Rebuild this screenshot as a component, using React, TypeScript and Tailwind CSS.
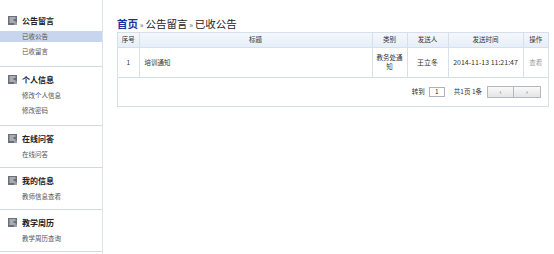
import React from 'react';

const menu = [
  { title: '公告留言', items: ['已收公告', '已收留言'], active: 0 },
  { title: '个人信息', items: ['修改个人信息', '修改密码'] },
  { title: '在线问答', items: ['在线问答'] },
  { title: '我的信息', items: ['教师信息查看'] },
  { title: '教学周历', items: ['教学周历查询'] },
];

const MenuIcon = () => (
  <svg width="9" height="9" viewBox="0 0 9 9" className="shrink-0">
    <rect x="0" y="0" width="9" height="9" fill="#6b7078" />
    <rect x="1.5" y="1.5" width="6" height="1" fill="#e8eaec" />
    <rect x="1.5" y="3.5" width="4" height="1" fill="#e8eaec" />
    <rect x="1.5" y="5.5" width="6" height="1" fill="#e8eaec" />
    <rect x="6" y="6.5" width="3" height="2.5" fill="#9aa0a8" />
  </svg>
);

const Sidebar = () => (
  <div className="w-[103px] shrink-0 border-r border-[#dde3ea] pt-[8px] h-[254px]">
    {menu.map((sec, i) => (
      <div key={i} className={`border-b border-[#d3d9e0] ${sec.items.length > 1 ? 'pb-[7px]' : 'pb-[5px]'}`}>
        <div className="flex items-center gap-[5px] pl-[8px] mt-[4px] h-[17px] text-[8px] font-bold text-[#222]">
          <MenuIcon />
          <span>{sec.title}</span>
        </div>
        {sec.items.map((it, j) => (
          <div key={j} className="h-[15px] flex items-center">
            <div
              className={`w-full pl-[22px] h-[11px] flex items-center text-[6.5px] text-[#555] ${
                sec.active === j ? 'bg-[#c8d5ef]' : ''
              }`}
            >
              {it}
            </div>
          </div>
        ))}
      </div>
    ))}
  </div>
);

const th = 'border border-[#d6e0eb] font-normal text-center text-[#333]';
const td = 'border border-[#d6e0eb] text-center text-[#333]';

export default function App() {
  return (
    <div className="flex w-[554px] h-[254px] bg-white overflow-hidden" style={{ fontFamily: '"Noto Sans CJK SC", "Noto Sans", sans-serif' }}>
      <Sidebar />
      <div className="pl-[14px] pr-[5px] pt-[16px] flex-1">
        <div className="text-[10.5px] leading-[15px] text-[#222]">
          <span className="text-[#1a2fa0] font-bold">首页</span>
          <span className="text-[#666] text-[8px]"> » </span>
          公告留言
          <span className="text-[#666] text-[8px]"> » </span>
          已收公告
        </div>
        <div className="border border-[#d6e0eb] w-[432px]">
          <table className="w-full border-collapse text-[6.5px] leading-[9px]">
            <thead>
              <tr className="h-[14px] bg-gradient-to-b from-[#f4f8fd] to-[#e6eef8]">
                <th className={`${th} w-[21px] border-t-0 border-l-0`}>序号</th>
                <th className={`${th} border-t-0`}>标题</th>
                <th className={`${th} w-[35px] border-t-0`}>类别</th>
                <th className={`${th} w-[41px] border-t-0`}>发送人</th>
                <th className={`${th} w-[75px] border-t-0`}>发送时间</th>
                <th className={`${th} w-[25px] border-t-0 border-r-0`}>操作</th>
              </tr>
            </thead>
            <tbody>
              <tr className="h-[30px]">
                <td className={`${td} border-l-0`}>1</td>
                <td className={`${td} text-left pl-[5px]`}>培训通知</td>
                <td className={`${td} px-[3px]`}>教务处通知</td>
                <td className={`${td} text-[7px]`}>王立冬</td>
                <td className={`${td} text-[7px]`}>2014-11-13 11:21:47</td>
                <td className={`${td} text-[#999] border-r-0`}>查看</td>
              </tr>
            </tbody>
          </table>
          <div className="h-[28px] flex items-center justify-end pr-[7px] text-[6.5px] text-[#333]">
            <span>转到</span>
            <div className="ml-[4px] w-[16px] h-[10px] border border-[#a9b4c0] flex items-center justify-center">1</div>
            <span className="ml-[9px]">共1页 1条</span>
            <div className="ml-[5px] flex h-[12px] border border-[#b4b9bf] bg-gradient-to-b from-[#fafafa] to-[#e4e4e4]">
              <div className="w-[26px] flex items-center justify-center border-r border-[#b4b9bf] text-[#555]">‹</div>
              <div className="w-[26px] flex items-center justify-center text-[#555]">›</div>
            </div>
          </div>
        </div>
      </div>
    </div>
  );
}
